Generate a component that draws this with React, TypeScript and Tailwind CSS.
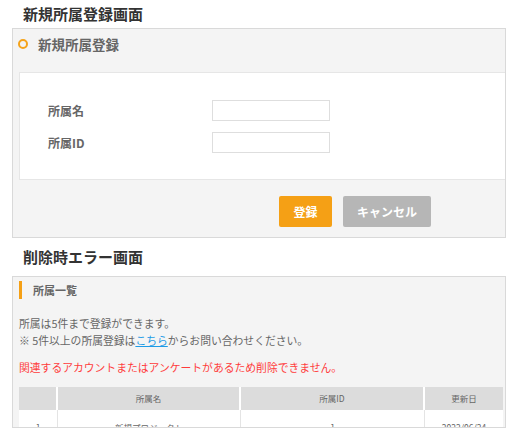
import React from "react";

const font = { fontFamily: '"Noto Sans CJK JP", "Noto Sans", sans-serif' };

export default function App() {
  return (
    <div
      className="w-[521px] h-[440px] overflow-hidden bg-white text-[#555]"
      style={font}
    >
      <div className="h-[28px] flex items-center pl-[23px] text-[15px] leading-[20px] font-bold text-[#333]">
        新規所属登録画面
      </div>

      <div className="ml-[12px] w-[494px] h-[210px] border border-[#d9d9d9] bg-[#f4f4f4] flex flex-col">
        <div className="h-[43px] flex items-start pt-[5px] pl-[5px]">
          <div className="h-[20px] flex items-center">
            <span className="w-[10px] h-[10px] rounded-full border-[2.5px] border-[#f5a31a]" />
            <span className="ml-[10px] text-[13.5px] leading-[20px] font-bold text-[#666]">
              新規所属登録
            </span>
          </div>
        </div>
        <div className="ml-[6px] h-[108px] bg-white border border-r-0 border-[#e6e6e6] pt-[27px] flex flex-col gap-[11px]">
          <div className="flex items-center h-[21px]">
            <span className="w-[192px] pl-[28px] text-[12px] font-bold text-[#666] leading-[16px]">
              所属名
            </span>
            <div className="w-[118px] h-[21px] border border-[#dedede] bg-white" />
          </div>
          <div className="flex items-center h-[21px]">
            <span className="w-[192px] pl-[28px] text-[12px] font-bold text-[#666] leading-[16px]">
              所属ID
            </span>
            <div className="w-[118px] h-[21px] border border-[#dedede] bg-white" />
          </div>
        </div>
        <div className="flex pl-[266px] pt-[16px] gap-[11px]">
          <div className="w-[53px] h-[31px] rounded-[2px] bg-[#f5a015] text-white text-[12px] font-bold flex items-center justify-center">
            登録
          </div>
          <div className="w-[88px] h-[31px] rounded-[2px] bg-[#b6b6b6] text-white text-[12px] font-bold flex items-center justify-center">
            キャンセル
          </div>
        </div>
      </div>

      <div className="h-[38px] flex items-center pl-[23px] text-[15px] leading-[20px] font-bold text-[#333]">
        削除時エラー画面
      </div>

      <div className="ml-[12px] w-[494px] h-[152px] border border-[#d9d9d9] bg-[#f4f4f4] overflow-hidden">
        <div className="h-[26px] flex items-center pl-[6px]">
          <span className="w-[3px] h-[18px] bg-[#f5a015] -mt-[1px]" />
          <span className="ml-[11px] text-[11px] font-bold text-[#666] leading-[16px]">
            所属一覧
          </span>
        </div>
        <div className="pl-[6px] mt-[12px] text-[10.8px] leading-[17px] text-[#666]">
          <div>所属は5件まで登録ができます。</div>
          <div>
            ※ 5件以上の所属登録は
            <span className="text-[#1e9be6] underline">こちら</span>
            からお問い合わせください。
          </div>
          <div className="mt-[10px] text-[#ff3b3b]">
            関連するアカウントまたはアンケートがあるため削除できません。
          </div>
        </div>
        <div className="ml-[6px] w-[484px] mt-[11px] text-[8.5px] text-[#666]">
          <div className="flex h-[23px] bg-[#dcdcdc]">
            <div className="w-[39px] border-r-[2px] border-white" />
            <div className="w-[183px] border-r-[2px] border-white flex items-center justify-center">
              所属名
            </div>
            <div className="w-[184px] border-r-[2px] border-white flex items-center justify-center">
              所属ID
            </div>
            <div className="flex-1 flex items-center justify-center">更新日</div>
          </div>
          <div className="flex h-[35px] bg-white">
            <div className="w-[39px] border-r border-[#e4e4e4] flex items-center justify-center">
              1
            </div>
            <div className="w-[183px] border-r border-[#e4e4e4] flex items-center justify-center">
              新規プロジェクト
            </div>
            <div className="w-[184px] border-r border-[#e4e4e4] flex items-center justify-center">
              1
            </div>
            <div className="flex-1 flex items-center justify-center">2022/06/24</div>
          </div>
        </div>
      </div>
    </div>
  );
}
